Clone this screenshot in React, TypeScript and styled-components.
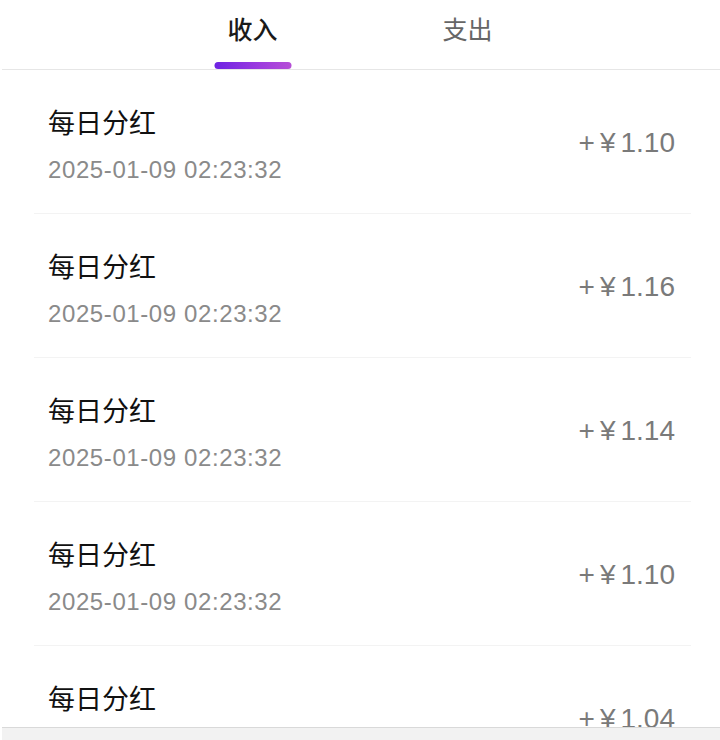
import React from "react";
import styled, { createGlobalStyle } from "styled-components";

const Global = createGlobalStyle`
  html, body { margin: 0; padding: 0; background: #fff; }
  body { font-family: "Liberation Sans", "Noto Sans CJK SC", sans-serif; }
  * { box-sizing: border-box; }
`;

const Page = styled.div`
  width: 720px;
  height: 740px;
  overflow: hidden;
  background: #fff;
`;

const TabBar = styled.div`
  display: flex;
  justify-content: center;
  height: 70px;
  margin-left: 2px;
  border-bottom: 1.5px solid #e6e6e6;
  padding-right: 2px;
`;

const Tab = styled.div<{ $active?: boolean }>`
  position: relative;
  width: 215px;
  display: flex;
  justify-content: center;
  padding-top: 11px;
  font-family: "Noto Sans CJK SC", sans-serif;
  font-size: 25px;
  line-height: 34px;
  font-weight: ${(p) => (p.$active ? 500 : 400)};
  color: ${(p) => (p.$active ? "#1a1a1a" : "#666")};
`;

const Indicator = styled.span`
  position: absolute;
  left: 50%;
  bottom: 0;
  transform: translateX(-50%);
  width: 77px;
  height: 7px;
  border-radius: 4px;
  background: linear-gradient(90deg, #6d23e3 0%, #9a3adf 55%, #b64fd6 100%);
`;

const List = styled.div`
  display: flex;
  flex-direction: column;
`;

const Row = styled.div`
  display: flex;
  align-items: center;
  justify-content: space-between;
  margin: 0 29px 0 34px;
  padding: 0 16px 0 14px;
  height: 144px;
  border-bottom: 1px solid #f3f3f3;
`;

const Info = styled.div`
  display: flex;
  flex-direction: column;
  padding-top: 6px;
`;

const Title = styled.div`
  font-family: "Noto Sans CJK SC", sans-serif;
  font-size: 27px;
  line-height: 36px;
  color: #111;
`;

const Time = styled.div`
  margin-top: 14px;
  font-size: 24px;
  line-height: 32px;
  letter-spacing: 0.6px;
  color: #8a8a8a;
`;

const Amount = styled.div`
  display: flex;
  align-items: baseline;
  padding-top: 3px;
  font-size: 28px;
  line-height: 36px;
  color: #7a7a7a;
`;

const Sign = styled.span`
  margin-right: 5px;
`;

const Currency = styled.span`
  margin-right: 5px;
`;

const BottomBar = styled.div`
  position: fixed;
  left: 2px;
  right: 0;
  bottom: 0;
  height: 13px;
  background: #f2f2f2;
  border-top: 1.5px solid #d9d9d9;
`;

const items = ["1.10", "1.16", "1.14", "1.10", "1.04"];

export default function App() {
  return (
    <Page>
      <Global />
      <TabBar>
        <Tab $active>
          收入
          <Indicator />
        </Tab>
        <Tab>支出</Tab>
      </TabBar>
      <List>
        {items.map((v, i) => (
          <Row key={i}>
            <Info>
              <Title>每日分红</Title>
              <Time>2025-01-09 02:23:32</Time>
            </Info>
            <Amount>
              <Sign>+</Sign>
              <Currency>¥</Currency>
              {v}
            </Amount>
          </Row>
        ))}
      </List>
      <BottomBar />
    </Page>
  );
}
